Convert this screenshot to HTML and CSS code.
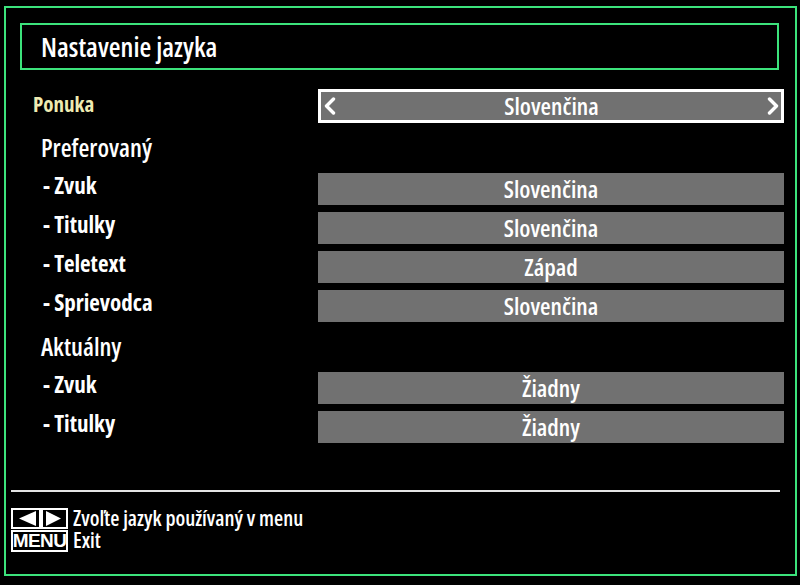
FILE: index.html
```html
<!DOCTYPE html>
<html lang="sk">
<head>
<meta charset="utf-8">
<title>Nastavenie jazyka</title>
<link rel="stylesheet" href="styles.css">
</head>
<body>
<div class="frame">
  <div class="title">Nastavenie jazyka</div>
  <div class="menu">
    <div class="row">
      <span class="lbl lbl-sel">Ponuka</span>
      <div class="val val-sel">
        <svg class="chev" width="13" height="18" viewBox="0 0 13 18"><polyline points="10.5,2 3.5,9 10.5,16" fill="none" stroke="#fff" stroke-width="3.4" stroke-linecap="round" stroke-linejoin="round"/></svg>
        <span class="val-text">Slovenčina</span>
        <svg class="chev" width="13" height="18" viewBox="0 0 13 18"><polyline points="2.5,2 9.5,9 2.5,16" fill="none" stroke="#fff" stroke-width="3.4" stroke-linecap="round" stroke-linejoin="round"/></svg>
      </div>
    </div>
    <div class="group">Preferovaný</div>
    <div class="row"><span class="lbl">- Zvuk</span><div class="val">Slovenčina</div></div>
    <div class="row"><span class="lbl">- Titulky</span><div class="val">Slovenčina</div></div>
    <div class="row"><span class="lbl">- Teletext</span><div class="val">Západ</div></div>
    <div class="row"><span class="lbl">- Sprievodca</span><div class="val">Slovenčina</div></div>
    <div class="group">Aktuálny</div>
    <div class="row"><span class="lbl">- Zvuk</span><div class="val">Žiadny</div></div>
    <div class="row"><span class="lbl">- Titulky</span><div class="val">Žiadny</div></div>
  </div>
  <div class="footer">
    <div class="rule"></div>
    <div class="hints">
      <div class="hint">
        <svg class="key" width="57" height="21" viewBox="0 0 57 21">
          <rect x="1" y="1" width="55" height="19" fill="#000" stroke="#fff" stroke-width="2"/>
          <rect x="28" y="1" width="4" height="19" fill="#fff"/>
          <polygon points="8,10.5 25,3 25,18" fill="#fff"/>
          <polygon points="35,3 35,18 50,10.5" fill="#fff"/>
        </svg>
        <span class="hint-text">Zvoľte jazyk používaný v menu</span>
      </div>
      <div class="hint">
        <span class="key key-menu">MENU</span>
        <span class="hint-text">Exit</span>
      </div>
    </div>
  </div>
</div>
</body>
</html>
```
FILE: styles.css
```css
html, body {
  margin: 0;
  padding: 0;
  background: #000;
}

body {
  width: 800px;
  height: 585px;
  overflow: hidden;
  color: #fff;
  font-family: "Open Sans", "DejaVu Sans", sans-serif;
  font-stretch: 75%;
  font-weight: 600;
}

.frame {
  box-sizing: border-box;
  margin: 6px 0 0 4px;
  width: 793px;
  height: 570px;
  border: 2px solid #3ce37c;
  display: flex;
  flex-direction: column;
}

.title {
  box-sizing: border-box;
  margin: 15px 0 0 14px;
  width: 759px;
  height: 47px;
  border: 2px solid #3ce37c;
  padding-left: 19px;
  display: flex;
  align-items: center;
  font-size: 27px;
  line-height: 1;
  white-space: nowrap;
}

.menu {
  display: flex;
  flex-direction: column;
  margin-top: 19px;
}

.row {
  display: flex;
  align-items: center;
  height: 32px;
  margin-top: 7px;
}

.row:first-child {
  margin-top: 0;
  height: 34px;
}

.lbl {
  box-sizing: border-box;
  width: 312px;
  padding-left: 37px;
  padding-bottom: 7px;
  font-size: 23px;
  font-weight: 700;
  line-height: 1;
  white-space: nowrap;
}

.lbl-sel {
  padding-left: 27px;
  padding-bottom: 4px;
  font-size: 21px;
  color: #efebb2;
}

.val {
  box-sizing: border-box;
  width: 466px;
  height: 100%;
  background: #717171;
  display: flex;
  align-items: center;
  justify-content: center;
  font-size: 24px;
  line-height: 1;
  white-space: nowrap;
}

.val-sel {
  border: 3px solid #fff;
  justify-content: space-between;
  padding: 0 1px 0 2px;
}

.val-text {
  flex: 1;
  text-align: center;
}

.chev {
  display: block;
}

.group {
  box-sizing: border-box;
  height: 43px;
  padding-left: 35px;
  padding-top: 5px;
  display: flex;
  align-items: center;
  font-size: 25px;
  line-height: 1;
}

.footer {
  margin-top: auto;
  padding: 0 0 23px 5px;
}

.rule {
  width: 769px;
  height: 2px;
  background: #e4e4e4;
}

.hints {
  margin-top: 16px;
  display: flex;
  flex-direction: column;
  gap: 1px;
}

.hint {
  display: flex;
  align-items: center;
  gap: 5px;
  height: 21px;
}

.key {
  display: block;
  flex: none;
}

.key-menu {
  box-sizing: border-box;
  width: 57px;
  height: 22px;
  border: 2px solid #fff;
  display: flex;
  align-items: center;
  justify-content: center;
  font-family: "Liberation Sans", Arial, sans-serif;
  font-stretch: normal;
  font-weight: 700;
  font-size: 19px;
  line-height: 1;
  letter-spacing: -0.6px;
}

.hint-text {
  font-size: 21px;
  line-height: 1;
  white-space: nowrap;
}
```
